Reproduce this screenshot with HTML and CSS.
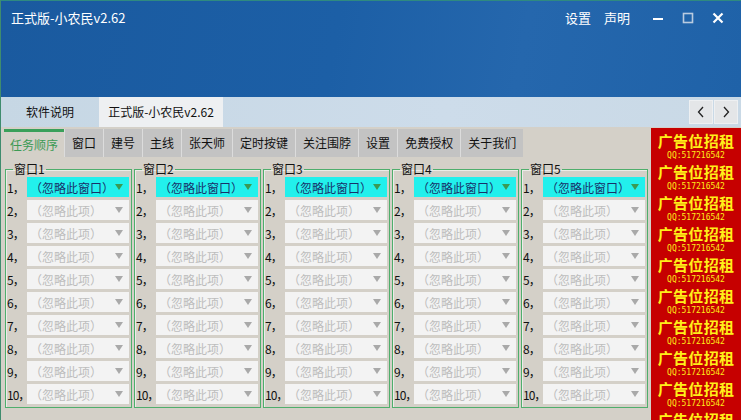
FILE: index.html
```html
<!DOCTYPE html>
<html lang="zh-CN">
<head>
  <meta charset="UTF-8">
  <title>正式版-小农民v2.62</title>
  <link rel="stylesheet" href="styles.css">
</head>
<body>
  <div id="app">
    <div id="header">
      <div class="title-bar">
        <span class="title">正式版-小农民v2.62</span>
        <span class="spacer"></span>
        <span class="menu-link">设置</span>
        <span class="menu-link">声明</span>
        <span class="win-btn">
          <svg width="12" height="12" viewBox="0 0 12 12"><rect x="1" y="6" width="10" height="2" fill="#fff"/></svg>
        </span>
        <span class="win-btn">
          <svg width="12" height="12" viewBox="0 0 12 12"><rect x="1.5" y="1.5" width="9" height="9" fill="none" stroke="#b9cbe0" stroke-width="1.6"/></svg>
        </span>
        <span class="win-btn">
          <svg width="12" height="12" viewBox="0 0 12 12"><path d="M1.5 1.5 L10.5 10.5 M10.5 1.5 L1.5 10.5" stroke="#fff" stroke-width="2.2"/></svg>
        </span>
      </div>
    </div>

    <div id="tab-strip">
      <div class="page-tab">软件说明</div>
      <div class="page-tab active">正式版-小农民v2.62</div>
      <span class="spacer"></span>
      <div class="nav-btn">
        <svg width="8" height="12" viewBox="0 0 8 12"><path d="M6 1 L1.5 6 L6 11" fill="none" stroke="#222" stroke-width="1.3"/></svg>
      </div>
      <div class="nav-btn">
        <svg width="8" height="12" viewBox="0 0 8 12"><path d="M2 1 L6.5 6 L2 11" fill="none" stroke="#222" stroke-width="1.3"/></svg>
      </div>
    </div>

    <div id="main">
      <div id="work">
        <div class="tabs">
          <div class="tab active">任务顺序</div>
          <div class="tab">窗口</div>
          <div class="tab">建号</div>
          <div class="tab">主线</div>
          <div class="tab">张天师</div>
          <div class="tab">定时按键</div>
          <div class="tab">关注围脖</div>
          <div class="tab">设置</div>
          <div class="tab">免费授权</div>
          <div class="tab">关于我们</div>
        </div>
        <div id="groups"></div>
      </div>
      <div id="ads"></div>
    </div>
  </div>

  <script>
    var groups = document.getElementById('groups');
    for (var g = 1; g <= 5; g++) {
      var html = '<fieldset class="group"><legend>窗口' + g + '</legend>';
      for (var i = 1; i <= 10; i++) {
        var first = i === 1;
        html += '<div class="row"><span class="num">' + i + '，</span>' +
          '<div class="combo' + (first ? ' on' : '') + '">' +
          '<span class="combo-text">' + (first ? '（忽略此窗口）' : '（忽略此项）') + '</span>' +
          '<span class="arrow"></span></div></div>';
      }
      html += '</fieldset>';
      groups.innerHTML += html;
    }

    var ads = document.getElementById('ads');
    for (var a = 0; a < 10; a++) {
      ads.innerHTML += '<div class="ad"><div class="ad-title">广告位招租</div><div class="ad-qq">QQ:517216542</div></div>';
    }
  </script>
</body>
</html>
```

FILE: styles.css
```css
body {
  margin: 0;
  font-family: "Noto Sans CJK SC", "Noto Sans", sans-serif;
  font-size: 12px;
  background: #d4d0c8;
}

#app {
  width: 741px;
  height: 420px;
  overflow: hidden;
  box-sizing: border-box;
  border-left: 1px solid #3f8c6e;
  display: flex;
  flex-direction: column;
}

.spacer {
  flex: 1;
}

#header {
  height: 97px;
  flex: none;
  box-sizing: border-box;
  border-top: 1px solid #2f8a80;
  background: linear-gradient(100deg, #1a5a9f 0%, #1c5fa6 45%, #2567ad 70%, #1f62a8 100%);
}

.title-bar {
  display: flex;
  align-items: center;
  height: 33px;
  padding: 0 8px 0 10px;
  color: #fff;
}

.title {
  font-size: 13px;
}

.menu-link {
  font-size: 13px;
  margin-right: 13px;
}

.win-btn {
  width: 30px;
  display: flex;
  justify-content: center;
  align-items: center;
}

.win-btn:first-of-type {
  margin-left: 4px;
}

#tab-strip {
  height: 30px;
  flex: none;
  display: flex;
  align-items: center;
  background: linear-gradient(90deg, #c6d7e4, #cddcea 60%, #c9d9e6);
  padding-right: 3px;
}

.page-tab {
  height: 30px;
  line-height: 30px;
  width: 98px;
  text-align: center;
  font-size: 12px;
  color: #111;
}

.page-tab.active {
  width: 124px;
  background: #eef0f2;
}

.nav-btn {
  width: 24px;
  height: 24px;
  margin-left: 1px;
  background: #e4e6e8;
  border: 1px solid #eef0f2;
  box-sizing: border-box;
  display: flex;
  align-items: center;
  justify-content: center;
}

#main {
  flex: 1;
  display: flex;
  background: #d4d0c8;
}

#work {
  width: 650px;
  padding-left: 3px;
  box-sizing: border-box;
}

.tabs {
  display: flex;
  height: 28px;
  margin-top: 2px;
}

.tab {
  padding: 0 7px;
  line-height: 28px;
  background: #c3c3c3;
  border-left: 1px solid #dcdcdc;
  color: #111;
  font-size: 12px;
}

.tab.active {
  background: #d4d0c8;
  color: #3c9a55;
  border-left: none;
  border-top: 3px solid #3aa05a;
  line-height: 25px;
  padding: 0 6px;
}

#groups {
  display: flex;
  gap: 2px;
  margin-top: 4px;
  padding-left: 1px;
}

.group {
  width: 127px;
  box-sizing: border-box;
  margin: 0;
  min-inline-size: 0;
  padding: 0 1px 3px 1px;
  border: 1px solid #4fae6c;
  box-shadow: inset 1px 1px 0 #ecece8;
}

.group legend {
  padding: 0 1px;
  margin-left: 6px;
  line-height: 16px;
  font-size: 12px;
  color: #111;
}

.row {
  display: flex;
  align-items: center;
  height: 20px;
  margin-bottom: 3px;
}

.row:last-child {
  margin-bottom: 0;
}

.num {
  width: 20px;
  font-size: 12px;
  color: #111;
  white-space: nowrap;
  letter-spacing: -1px;
}

.combo {
  width: 102px;
  height: 20px;
  display: flex;
  align-items: center;
  background: #f3f3f3;
  color: #bdbdbd;
  box-sizing: border-box;
  padding: 0 6px 0 3px;
}

.combo-text {
  flex: 1;
  font-size: 12px;
  white-space: nowrap;
}

.arrow {
  width: 0;
  height: 0;
  border-left: 4px solid transparent;
  border-right: 4px solid transparent;
  border-top: 6px solid #a9a9a9;
}

.combo.on {
  background: #22f0ec;
  color: #18306a;
}

.combo.on .arrow {
  border-top-color: #3a9a55;
}

#ads {
  width: 90px;
  margin-left: auto;
  margin-top: 1px;
  background: #c60000;
  padding-top: 2px;
  box-sizing: border-box;
}

.ad {
  height: 31px;
  text-align: center;
  color: #ffef1a;
}

.ad-title {
  font-size: 15px;
  font-weight: bold;
  line-height: 21px;
  letter-spacing: 0.3px;
}

.ad-qq {
  font-family: "DejaVu Sans Mono", monospace;
  font-size: 8px;
  line-height: 10px;
}
```
